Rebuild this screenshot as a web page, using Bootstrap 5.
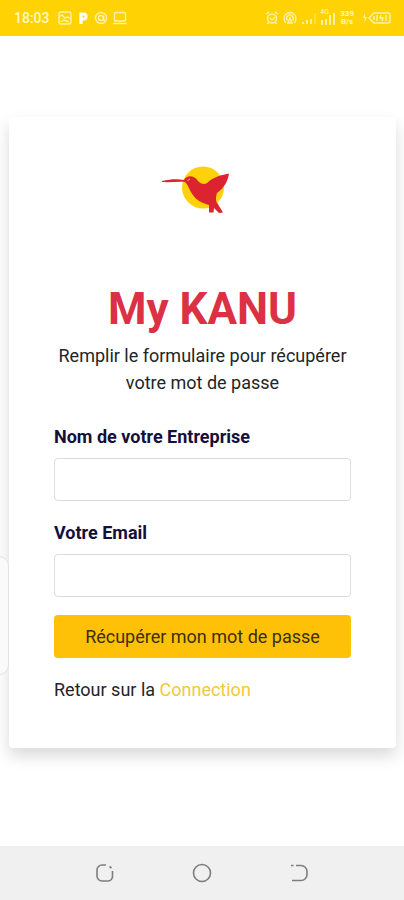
<!DOCTYPE html>
<html lang="fr">
<head>
<meta charset="utf-8">
<meta name="viewport" content="width=device-width, initial-scale=1">
<title>My KANU</title>
<link href="https://cdn.jsdelivr.net/npm/bootstrap@5.3.0/dist/css/bootstrap.min.css" rel="stylesheet">
<style>
body { font-family: Roboto, "Liberation Sans", sans-serif; font-size: 18px; line-height: 27px; color: #212529; background: #fff; }
.status-bar { background: #ffd303; height: 36px; padding: 0 13px 0 14px; color: #fff7c4; font-size: 14px; line-height: 16px; }
.status-bar svg { display: block; fill: none; stroke: #fff3ac; stroke-width: 1.4; }
.net-label { font-size: 8px; line-height: 8px; }
.net-gen { font-size: 7px; line-height: 7px; top: -2px; left: 0; }
.login-area { padding: 81px 8px 0 9px; }
.login-card { border: 0; border-radius: 4px; padding: 45px; box-shadow: 0 8px 16px rgba(0, 0, 0, .15); }
.logo { width: 80px; height: 56px; margin-bottom: 64px; }
.brand-title { font-size: 44px; line-height: 54px; color: #dc3045; margin-bottom: 6px; }
.intro { margin-bottom: 27px; }
.field-label { color: #14103a; margin-bottom: 8px; }
.field-box { height: 43px; border: 1px solid #dcdcdc; border-radius: 4px; }
.field-group { margin-bottom: 18px; }
.send-btn { height: 43px; padding: 0; border-radius: 4px; font-size: 18px; background: #ffc107; color: #3a300f; }
.login-hint { margin-top: 18px; }
.login-link { color: #f3c83c; }
.edge-panel { left: -12px; top: 556px; width: 21px; height: 119px; border: 1px solid #e2e2e2; border-radius: 10px; background: #fafafa; }
.system-nav { height: 54px; background: #f0f0f0; gap: 77px; }
.system-nav svg { display: block; fill: none; stroke: #7d7d7d; stroke-width: 1.6; }
.nav-key { border: 0; background: none; padding: 0; }
</style>
<script src="https://cdn.jsdelivr.net/npm/bootstrap@5.3.0/dist/js/bootstrap.bundle.min.js" defer></script>
</head>
<body class="d-flex flex-column min-vh-100 position-relative overflow-x-hidden">
<header class="status-bar d-flex align-items-center justify-content-between">
  <div class="d-flex align-items-center gap-1">
    <span class="fw-medium me-1">18:03</span>
    <svg width="14" height="14" viewBox="0 0 14 14"><rect x="1" y="1" width="12" height="12" rx="2"/><path d="M1 6l3-2 3 3 3-1 3 2M3 11l3-2 5 2"/></svg>
    <svg width="14" height="14" viewBox="0 0 14 14"><path d="M5 13V3h2.500a2.500 2.500 0 0 1 0 5H5" stroke="#fff" stroke-width="3.200"/></svg>
    <svg width="14" height="14" viewBox="0 0 14 14"><circle cx="7" cy="7" r="5.500"/><circle cx="7" cy="7" r="2.500"/><path d="M9.500 5v4l2 1"/></svg>
    <svg width="16" height="14" viewBox="0 0 16 14"><rect x="2.500" y="1.500" width="11" height="8.500" rx="1"/><path d="M1 12.500h14"/></svg>
  </div>
  <div class="d-flex align-items-center gap-1">
    <svg width="14" height="14" viewBox="0 0 14 14"><circle cx="7" cy="7.500" r="4.500"/><path d="M1 3l3-2M13 3l-3-2M5 7l2 2 3-3M3.500 11.500L2.500 13M10.500 11.500l1 1.500"/></svg>
    <svg width="14" height="14" viewBox="0 0 14 14"><path d="M3 12a6 6 0 1 1 8 0M4.500 9.500a3.300 3.300 0 1 1 5 0M7 7L5 12h4z"/></svg>
    <svg width="15" height="14" viewBox="0 0 15 14"><path d="M2 11v2M6 9v4M10 8v5" stroke-width="1.800"/><path d="M14 2v11" opacity=".5"/></svg>
    <span class="position-relative"><svg width="16" height="14" viewBox="0 0 16 14"><path d="M2 9v5M6 8v6M10 4v10M14 2v12" stroke-width="1.800"/></svg><span class="net-gen position-absolute">4G</span></span>
    <span class="net-label fw-bold text-center">339<br>B/s</span>
    <svg class="ms-1" width="29" height="14" viewBox="0 0 29 14"><path d="M3 2L1 7h2l-1 5 3-6H3z" fill="#fff3ac" stroke="none"/><path d="M12 2h14a2 2 0 0 1 2 2v6a2 2 0 0 1-2 2H12L7 7z"/><path d="M12 5v4M15 4v6M19 4l-1 3h3l-1 3M24 4v6"/></svg>
  </div>
</header>

<main class="login-area flex-grow-1">
  <section class="login-card card">
    <svg class="logo align-self-center" viewBox="162 161 80 56" role="img" aria-label="My KANU" overflow="visible">
      <circle cx="202" cy="186.500" r="21" fill="#fdd20a"/>
      <path fill="#dc2430" d="M161 180C170 178 177 178 183 179C186 174 193 174 197 180C200 183 203 184 206 182C211 177 219 174 228 172.500C227 180 223 187 216 192C215 195 215 197 215 200L222 211.500L218 212L213 207L212.500 211.500H208V204C201 202 195 199 192 194C188 189 188 185 184 181C177 180.500 169 181.500 161 181Z"/>
      <path d="M186.500 179.500l2.500-1.500" stroke="#f4a6a4" stroke-width="1" fill="none"/>
    </svg>
    <h1 class="brand-title fw-bold text-center">My KANU</h1>
    <p class="intro text-center">Remplir le formulaire pour récupérer votre mot de passe</p>
    <form>
      <div class="field-group">
        <label class="field-label d-block fw-bold" for="company">Nom de votre Entreprise</label>
        <input class="field-box form-control" id="company" type="text">
      </div>
      <div class="field-group">
        <label class="field-label d-block fw-bold" for="email">Votre Email</label>
        <input class="field-box form-control" id="email" type="email">
      </div>
      <button class="send-btn btn w-100" type="submit">Récupérer mon mot de passe</button>
    </form>
    <p class="login-hint mb-0">Retour sur la <a class="login-link text-decoration-none" href="#">Connection</a></p>
  </section>
</main>
<div class="edge-panel position-absolute"></div>

<nav class="system-nav d-flex align-items-center justify-content-center" aria-label="Navigation du téléphone">
  <button class="nav-key" type="button" aria-label="Applications récentes"><svg width="20" height="20" viewBox="0 0 20 20"><path d="M11 2H7a5 5 0 0 0-5 5v6a5 5 0 0 0 5 5h6a4.500 4.500 0 0 0 4.500-5V8"/><path d="M14.500 3.500l2 1.500"/></svg></button>
  <button class="nav-key" type="button" aria-label="Accueil"><svg width="20" height="20" viewBox="0 0 20 20"><circle cx="10" cy="10" r="8.500"/></svg></button>
  <button class="nav-key" type="button" aria-label="Retour"><svg width="20" height="20" viewBox="0 0 20 20"><path d="M7 2.500h5a6 6 0 0 1 6 6v3a6 6 0 0 1-6 6H3M2 2.500h2.500"/></svg></button>
</nav>
</body>
</html>
